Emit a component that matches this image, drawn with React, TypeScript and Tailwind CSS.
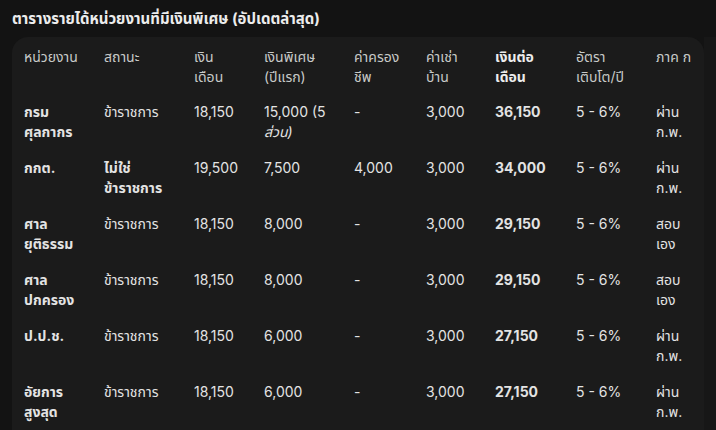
import React from "react";

type Row = {
  name: string[];
  status: string[];
  statusBold?: boolean;
  salary: string;
  bonus: React.ReactNode;
  living: string;
  rent: string;
  total: string;
  growth: string;
  exam: string[];
};

const rows: Row[] = [
  {
    name: ["กรม", "ศุลกากร"],
    status: ["ข้าราชการ"],
    salary: "18,150",
    bonus: (
      <>
        <div>15,000 (5</div>
        <div className="italic">ส่วน)</div>
      </>
    ),
    living: "-",
    rent: "3,000",
    total: "36,150",
    growth: "5 - 6%",
    exam: ["ผ่าน", "ก.พ."],
  },
  {
    name: ["กกต."],
    status: ["ไม่ใช่", "ข้าราชการ"],
    statusBold: true,
    salary: "19,500",
    bonus: "7,500",
    living: "4,000",
    rent: "3,000",
    total: "34,000",
    growth: "5 - 6%",
    exam: ["ผ่าน", "ก.พ."],
  },
  {
    name: ["ศาล", "ยุติธรรม"],
    status: ["ข้าราชการ"],
    salary: "18,150",
    bonus: "8,000",
    living: "-",
    rent: "3,000",
    total: "29,150",
    growth: "5 - 6%",
    exam: ["สอบ", "เอง"],
  },
  {
    name: ["ศาล", "ปกครอง"],
    status: ["ข้าราชการ"],
    salary: "18,150",
    bonus: "8,000",
    living: "-",
    rent: "3,000",
    total: "29,150",
    growth: "5 - 6%",
    exam: ["สอบ", "เอง"],
  },
  {
    name: ["ป.ป.ช."],
    status: ["ข้าราชการ"],
    salary: "18,150",
    bonus: "6,000",
    living: "-",
    rent: "3,000",
    total: "27,150",
    growth: "5 - 6%",
    exam: ["ผ่าน", "ก.พ."],
  },
  {
    name: ["อัยการ", "สูงสุด"],
    status: ["ข้าราชการ"],
    salary: "18,150",
    bonus: "6,000",
    living: "-",
    rent: "3,000",
    total: "27,150",
    growth: "5 - 6%",
    exam: ["ผ่าน", "ก.พ."],
  },
];

const Lines = ({ lines, className = "" }: { lines: string[]; className?: string }) => (
  <div className={className}>
    {lines.map((l, i) => (
      <div key={i}>{l}</div>
    ))}
  </div>
);

const gridCols =
  "grid grid-cols-[92px_90px_70px_90px_72px_69px_81px_80px_60px] whitespace-nowrap";

export default function App() {
  return (
    <div
      className="w-[716px] h-[430px] overflow-hidden bg-[#131313] text-[#e3e3e3]"
      style={{ fontFamily: "Inter, 'Noto Sans', 'Noto Sans Thai', sans-serif" }}
    >
      <div className="h-[37px] px-3 pt-[7px] text-[15px] leading-6 font-bold text-[#ececec]">
        ตารางรายได้หน่วยงานที่มีเงินพิเศษ (อัปเดตล่าสุด)
      </div>
      <div className="flex">
        <div className="ml-3 w-[692px] h-[393px] rounded-t-2xl bg-[#1b1b1b] overflow-hidden">
          <div className={`${gridCols} pt-[10px] pb-[7px] text-[14px] leading-5 text-[#c8cac8]`}>
            <div className="pl-3">หน่วยงาน</div>
            <div>สถานะ</div>
            <Lines lines={["เงิน", "เดือน"]} />
            <Lines lines={["เงินพิเศษ", "(ปีแรก)"]} />
            <Lines lines={["ค่าครอง", "ชีพ"]} />
            <Lines lines={["ค่าเช่า", "บ้าน"]} />
            <Lines lines={["เงินต่อ", "เดือน"]} className="font-bold text-[#ececec]" />
            <Lines lines={["อัตรา", "เติบโต/ปี"]} />
            <div>ภาค ก</div>
          </div>
          {rows.map((r, i) => (
            <div key={i} className={`${gridCols} py-2 text-[14px] leading-5`}>
              <Lines lines={r.name} className="pl-3 font-bold" />
              <Lines lines={r.status} className={r.statusBold ? "font-bold" : ""} />
              <div>{r.salary}</div>
              <div>{r.bonus}</div>
              <div>{r.living}</div>
              <div>{r.rent}</div>
              <div className="font-bold">{r.total}</div>
              <div>{r.growth}</div>
              <Lines lines={r.exam} />
            </div>
          ))}
        </div>
        <div className="flex-1 bg-[#171717] h-[393px]" />
      </div>
    </div>
  );
}
